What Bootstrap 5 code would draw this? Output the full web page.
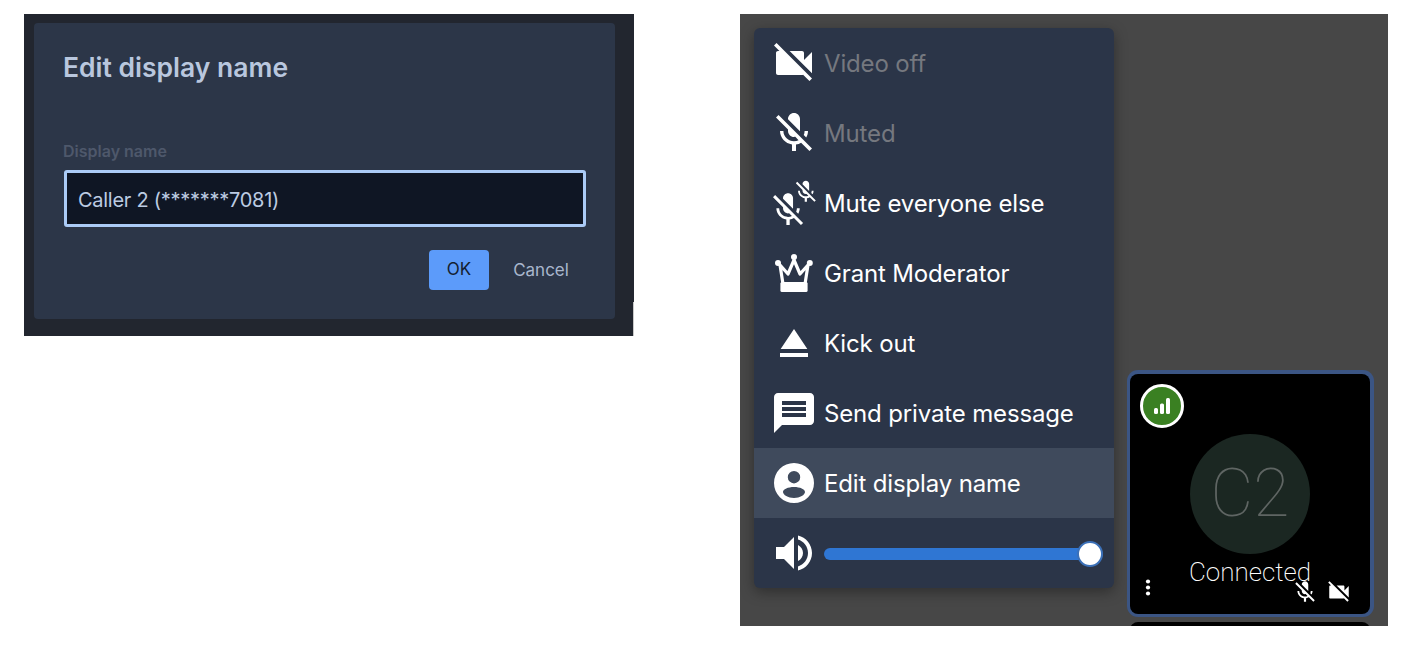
<!DOCTYPE html>
<html lang="en">
<head>
<meta charset="utf-8">
<title>Edit display name</title>
<link href="https://cdn.jsdelivr.net/npm/bootstrap@5.3.0/dist/css/bootstrap.min.css" rel="stylesheet">
<style>
html,body{height:100%;overflow:hidden}
body{background:#fff;font-family:Inter,"Liberation Sans",sans-serif}
.shot{height:646px;gap:106px;padding:14px 0 20px 24px}
.dlg-shell{width:610px;height:322px;background:#22262f;padding:9px 19px 17px 10px;position:relative}
.dlg-shell::after{content:"";position:absolute;right:0;top:288px;bottom:0;width:1px;background:#c9c9c9}
.dlg-card{height:100%;background:#2c3648;border:0;border-radius:4px;padding:24px 29px 0 30px;color:#b9c7de}
.dlg-title{font-size:26.500px;line-height:40px;font-weight:600;color:#b9c7de;margin:0 0 55px -1px}
.dlg-label{font-size:16px;line-height:20px;font-weight:600;color:#4e586b;margin:-1px 0 9px -1px;display:block}
.dlg-input,.dlg-input:focus{height:57px;background:#0f1624;border:3px solid #abcbf6;border-radius:3px;color:#bccbe2;font-size:20px;letter-spacing:-.27px;padding:2px 11px 0;box-shadow:none}
.dlg-actions{margin-top:23px}
.ok-btn{width:60px;height:40px;padding:0;border-radius:4px;background:#5c9bfa;border:0;color:#14202f;font-size:17px}
.cancel-btn{width:97px;height:40px;padding:2px 0 0 7px;border:0;color:#a9b7cd;font-size:17px;background:none}
.stage{width:648px;height:612px;background:#474747;overflow:hidden;padding:14px 14px 0}
.menu-box{width:360px;height:560px;background:#2b3548;border-radius:6px;box-shadow:0 4px 14px rgba(0,0,0,.35);overflow:hidden;color:#fff}
.menu-row{height:70px;padding-left:16px;gap:6px;font-size:24px;letter-spacing:-.15px;line-height:1;background:transparent;border:0;color:#fff;white-space:nowrap}
.menu-row span{padding-top:2px}
.menu-row.dimmed{color:#75787f}
.menu-row.hovered{background:#3f4a5c}
.menu-row svg{width:48px;height:48px;flex:none;fill:#fff}
.vol-range{width:279px;height:26px;padding:0;display:block;background:transparent;overflow:visible;margin-top:2px}
.vol-range::-webkit-slider-runnable-track{height:12px;background:#2f76d3;border-radius:6px}
.vol-range::-webkit-slider-thumb{width:26px;height:26px;margin-top:-7px;background:#fff;border:2px solid #3b70b8;border-radius:50%;-webkit-appearance:none;appearance:none}
.tiles{margin-left:13px;width:247px;padding-top:342px}
.tile{width:247px;height:247px;padding:4px 3px 3px;border-radius:11px;background:#3b5584;margin-bottom:5px;flex:none}
.tile-in{width:240px;height:240px;background:#000;border-radius:8px;position:relative}
.tile-next{width:240px;height:30px;background:#000;border-radius:8px;margin-left:3px;flex:none}
.sig{position:absolute;left:10px;top:10px;width:44px;height:44px;border:3px solid #fff;border-radius:50%;background:#3a8022}
.avatar-disc{position:absolute;left:60px;top:60px;width:120px;height:120px;border-radius:50%;background:#1b2722;color:#5f6563;font:100 66px/120px Roboto,sans-serif;text-align:center}
.conn{position:absolute;left:0;right:0;top:184px;text-align:center;color:#fff;font:200 26px/28px Roboto,sans-serif}
.tile-ic{position:absolute;fill:#fff}
</style>
</head>
<body>
<svg width="0" height="0" class="position-absolute">
<defs>
<path id="micoff" d="M19 11h-1.700c0 .74-.16 1.430-.43 2.050l1.230 1.230c.56-.98.9-2.090.9-3.280zm-4.020.17c0-.06.02-.11.02-.17V5c0-1.660-1.340-3-3-3S9 3.340 9 5v.18l5.980 5.990zM4.270 3L3 4.270l6.010 6.010V11c0 1.660 1.330 3 2.990 3 .22 0 .44-.03.65-.08l1.660 1.660c-.71.33-1.500.52-2.310.52-2.760 0-5.300-2.100-5.300-5.100H5c0 3.410 2.720 6.230 6 6.720V21h2v-3.280c.91-.13 1.770-.45 2.540-.9L19.730 21 21 19.730 4.270 3z"/>
<path id="vidoff" d="M21 6.500l-4 4V7c0-.55-.45-1-1-1H9.820L21 17.180V6.500zM3.270 2L2 3.270 4.730 6H4c-.55 0-1 .45-1 1v10c0 .55.45 1 1 1h12c.21 0 .39-.08.54-.18L19.730 21 21 19.730 3.270 2z"/>
</defs>
</svg>
<main class="shot d-flex align-items-start">
  <section class="dlg-shell flex-none">
    <div class="card dlg-card">
      <h5 class="dlg-title">Edit display name</h5>
      <label class="dlg-label" for="dn">Display name</label>
      <input id="dn" class="form-control dlg-input" value="Caller 2 (*******7081)">
      <div class="d-flex justify-content-end align-items-center dlg-actions">
        <button class="btn ok-btn" type="button">OK</button>
        <button class="btn cancel-btn" type="button">Cancel</button>
      </div>
    </div>
  </section>
  <section class="stage d-flex align-items-start">
    <div class="menu-box list-group flex-none">
      <div class="menu-row dimmed d-flex align-items-center"><svg viewBox="0 0 24 24"><use href="#vidoff"/></svg><span>Video off</span></div>
      <div class="menu-row dimmed d-flex align-items-center"><svg viewBox="0 0 24 24"><use href="#micoff"/></svg><span>Muted</span></div>
      <div class="menu-row d-flex align-items-center"><svg viewBox="0 0 48 48"><g transform="translate(-2,11) scale(1.67)"><use href="#micoff"/></g><g transform="translate(22.5,-0.5) scale(1.11)"><use href="#micoff"/></g></svg><span>Mute everyone else</span></div>
      <div class="menu-row d-flex align-items-center"><svg viewBox="0 0 24 24"><path d="M5 8l1.500 9.500h11L19 8l-4 4.500L12 5.500l-3 7z" fill="none" stroke="#fff" stroke-width="1.6" stroke-linejoin="round"/><rect x="5.2" y="16.5" width="13.6" height="5" rx=".8"/><circle cx="4" cy="7" r="1.5"/><circle cx="12" cy="4" r="1.5"/><circle cx="19.9" cy="7" r="1.5"/></svg><span>Grant Moderator</span></div>
      <div class="menu-row d-flex align-items-center"><svg viewBox="0 0 24 24"><path d="M5 17h14v2H5zm7-12L5.330 15h13.340z"/></svg><span>Kick out</span></div>
      <div class="menu-row d-flex align-items-center"><svg viewBox="0 0 24 24"><path d="M20 2H4c-1.100 0-1.990.9-1.990 2L2 22l4-4h14c1.100 0 2-.9 2-2V4c0-1.100-.9-2-2-2zm-2 12H6v-2h12v2zm0-3H6V9h12v2zm0-3H6V6h12v2z"/></svg><span>Send private message</span></div>
      <div class="menu-row hovered d-flex align-items-center"><svg viewBox="0 0 24 24"><path fill-rule="evenodd" d="M12 2a10 10 0 1 0 0 20 10 10 0 0 0 0-20zm0 4a3.100 3.100 0 1 1 0 6.200A3.100 3.100 0 0 1 12 6zm0 8c3 0 5.500 1.100 5.500 2.500S15 19.500 12 19.500 6.500 17.900 6.500 16.500 9 14 12 14z"/></svg><span>Edit display name</span></div>
      <div class="menu-row d-flex align-items-center"><svg viewBox="0 0 24 24"><path d="M3 9v6h4l5 5V4L7 9H3zm13.500 3c0-1.770-1.020-3.290-2.500-4.030v8.050c1.480-.73 2.500-2.250 2.500-4.020zM14 3.230v2.060c2.890.86 5 3.540 5 6.710s-2.110 5.850-5 6.710v2.060c4.010-.91 7-4.490 7-8.770s-2.990-7.860-7-8.770z"/></svg><input class="form-range vol-range" type="range" min="0" max="100" value="100" aria-label="Volume"></div>
    </div>
    <div class="tiles d-flex flex-column flex-none">
      <div class="tile">
        <div class="tile-in">
          <div class="sig d-flex align-items-center justify-content-center"><svg width="18" height="18" viewBox="0 0 18 18" fill="#fff"><rect x="1" y="11" width="4" height="6" rx="1.500"/><rect x="7" y="6.500" width="4" height="10.500" rx="1.500"/><rect x="13" y="1" width="4" height="16" rx="1.500"/></svg></div>
          <div class="avatar-disc">C2</div>
          <div class="conn">Connected</div>
          <svg class="tile-ic" style="left:14px;top:205px" width="8" height="17" viewBox="0 0 8 17"><circle cx="4" cy="2.500" r="2.100"/><circle cx="4" cy="8.500" r="2.100"/><circle cx="4" cy="14.500" r="2.100"/></svg>
          <svg class="tile-ic" style="left:162px;top:205px" width="26" height="26" viewBox="0 0 24 24"><use href="#micoff"/></svg>
          <svg class="tile-ic" style="left:196px;top:205px" width="26" height="26" viewBox="0 0 24 24"><use href="#vidoff"/></svg>
        </div>
      </div>
      <div class="tile-next"></div>
    </div>
  </section>
</main>
</body>
</html>
